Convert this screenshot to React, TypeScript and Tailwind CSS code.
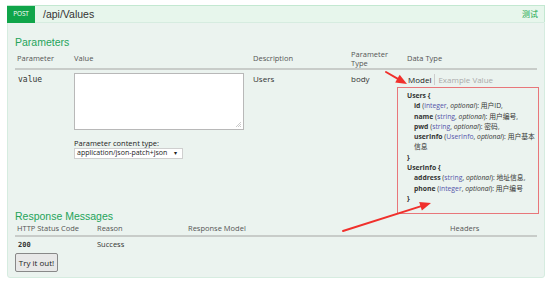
import React from "react";

const font = { fontFamily: '"Open Sans", "Noto Sans", "Noto Sans CJK SC", sans-serif' };
const lib = { fontFamily: '"Liberation Sans", "Noto Sans CJK SC", sans-serif' };

function Arrow({ x1, y1, x2, y2 }: { x1: number; y1: number; x2: number; y2: number }) {
  const dx = x2 - x1;
  const dy = y2 - y1;
  const len = Math.hypot(dx, dy);
  const ux = dx / len;
  const uy = dy / len;
  const hl = 11;
  const hw = 4.5;
  const bx = x2 - ux * hl;
  const by = y2 - uy * hl;
  const p1 = `${bx - uy * hw},${by + ux * hw}`;
  const p2 = `${bx + uy * hw},${by - ux * hw}`;
  return (
    <g>
      <line x1={x1} y1={y1} x2={bx} y2={by} stroke="#f0302c" strokeWidth={2} strokeLinecap="round" />
      <polygon points={`${x2},${y2} ${p1} ${p2}`} fill="#f0302c" />
    </g>
  );
}

export default function App() {
  return (
    <div className="relative w-[554px] h-[283px] bg-white overflow-hidden" style={font}>
      <div className="pt-[5px] pl-[7px] w-[545px]">
        {/* header */}
        <div className="flex items-center h-[17px] bg-[#e7f6ec] border border-[#c3e8d1] border-b-0">
          <div className="h-[17px] w-[28px] -ml-px bg-[#10a54a] text-white text-[6.5px] flex items-center justify-center tracking-tight">POST</div>
          <div className="ml-[8px] text-[10.5px] text-[#333] leading-none" style={lib}>/api/Values</div>
          <div className="ml-auto mr-[6px] text-[8px] text-[#10a54a]" style={{ fontFamily: '"Noto Sans CJK SC", sans-serif' }}>测试</div>
        </div>
        {/* content */}
        <div className="h-[256px] bg-[#ebf3ef] border border-[#d6ece0] rounded-b-[3px] px-[7px] pt-[12px]">
          <div className="text-[10.5px] leading-[14px] text-[#24a35a]" style={lib}>Parameters</div>
          <div className="grid grid-cols-[59px_179px_98px_56px_1fr] text-[7.5px] text-[#555] border-b-2 border-[#c8ccc9] h-[20px] mt-[1px] items-center">
            <div className="pl-[2px]">Parameter</div>
            <div>Value</div>
            <div>Description</div>
            <div className="leading-[9px]">Parameter<br />Type</div>
            <div>Data Type</div>
          </div>
          <div className="grid grid-cols-[59px_179px_98px_56px_1fr] text-[8px] text-[#333] h-[139px]">
            <div className="pl-[3px] pt-[4px] text-[8px]" style={{ fontFamily: '"DejaVu Sans Mono", monospace' }}>value</div>
            <div className="pt-[3px]">
              <div className="relative w-[170px] h-[57px] bg-white border border-[#b8b8b8]">
                <svg className="absolute right-[2px] bottom-[2px]" width="5" height="5" viewBox="0 0 5 5">
                  <path d="M5 0 L0 5 M5 2 L2 5 M5 4 L4 5" stroke="#aaa" strokeWidth="0.6" />
                </svg>
              </div>
              <div className="mt-[8px] text-[7.5px] leading-[10px] text-[#222]">Parameter content type:</div>
              <div className="w-[109px] h-[11px] bg-white border border-[#cfcfcf] flex items-center text-[7px] text-[#222] pl-[2px]">
                <span>application/json-patch+json</span>
                <span className="ml-auto mr-[5px] text-[6px]">▾</span>
              </div>
            </div>
            <div className="pt-[3px]">Users</div>
            <div className="pt-[3px]">body</div>
            <div className="pt-[4px]">
              <div className="flex items-center text-[8px] leading-[11px] pl-[1px]">
                <span className="text-[#222] pr-[3px] border-r border-[#ccc]">Model</span>
                <span className="text-[#aaa] pl-[3px]">Example Value</span>
              </div>
              <div className="mt-[2px] -ml-[10px] w-[142px] h-[127px] border-[1.5px] border-[#e8767a] pl-[9px] pt-[3px] text-[6.8px] leading-[10.3px] text-[#333] whitespace-nowrap overflow-hidden" style={{ fontFamily: '"Open Sans", "Noto Sans CJK SC", sans-serif' }}>
                <div className="font-bold">Users {"{"}</div>
                <div className="pl-[7px]"><b>id</b> (<span className="text-[#5555aa]">integer</span>, <i>optional</i>): 用户ID,</div>
                <div className="pl-[7px]"><b>name</b> (<span className="text-[#5555aa]">string</span>, <i>optional</i>): 用户编号,</div>
                <div className="pl-[7px]"><b>pwd</b> (<span className="text-[#5555aa]">string</span>, <i>optional</i>): 密码,</div>
                <div className="pl-[7px]"><b>userInfo</b> (<span className="text-[#5555aa]">UserInfo</span>, <i>optional</i>): 用户基本</div>
                <div className="pl-[7px]">信息</div>
                <div className="font-bold">{"}"}</div>
                <div className="font-bold">UserInfo {"{"}</div>
                <div className="pl-[7px]"><b>address</b> (<span className="text-[#5555aa]">string</span>, <i>optional</i>): 地址信息,</div>
                <div className="pl-[7px]"><b>phone</b> (<span className="text-[#5555aa]">integer</span>, <i>optional</i>): 用户编号</div>
                <div className="font-bold">{"}"}</div>
              </div>
            </div>
          </div>
          <div className="text-[10.5px] leading-[14px] text-[#24a35a]" style={lib}>Response Messages</div>
          <div className="grid grid-cols-[82px_91px_262px_1fr] text-[7.5px] text-[#555] border-b-2 border-[#c8ccc9] h-[14px] items-center">
            <div className="pl-[2px]">HTTP Status Code</div>
            <div>Reason</div>
            <div>Response Model</div>
            <div>Headers</div>
          </div>
          <div className="grid grid-cols-[82px_91px_262px_1fr] text-[7.5px] text-[#333] h-[16px] items-center">
            <div className="pl-[3px] font-bold text-[7px]" style={{ fontFamily: '"DejaVu Sans Mono", monospace' }}>200</div>
            <div>Success</div>
            <div></div>
            <div></div>
          </div>
          <button className="w-[43px] h-[19px] bg-[#e8e8e8] border border-[#888] rounded-[2px] text-[8px] text-[#222] flex items-center justify-center">Try it out!</button>
        </div>
      </div>
      <svg className="absolute inset-0 pointer-events-none" width="554" height="283">
        <Arrow x1={386} y1={72} x2={407} y2={84} />
        <Arrow x1={343} y1={231} x2={431} y2={203} />
      </svg>
    </div>
  );
}
